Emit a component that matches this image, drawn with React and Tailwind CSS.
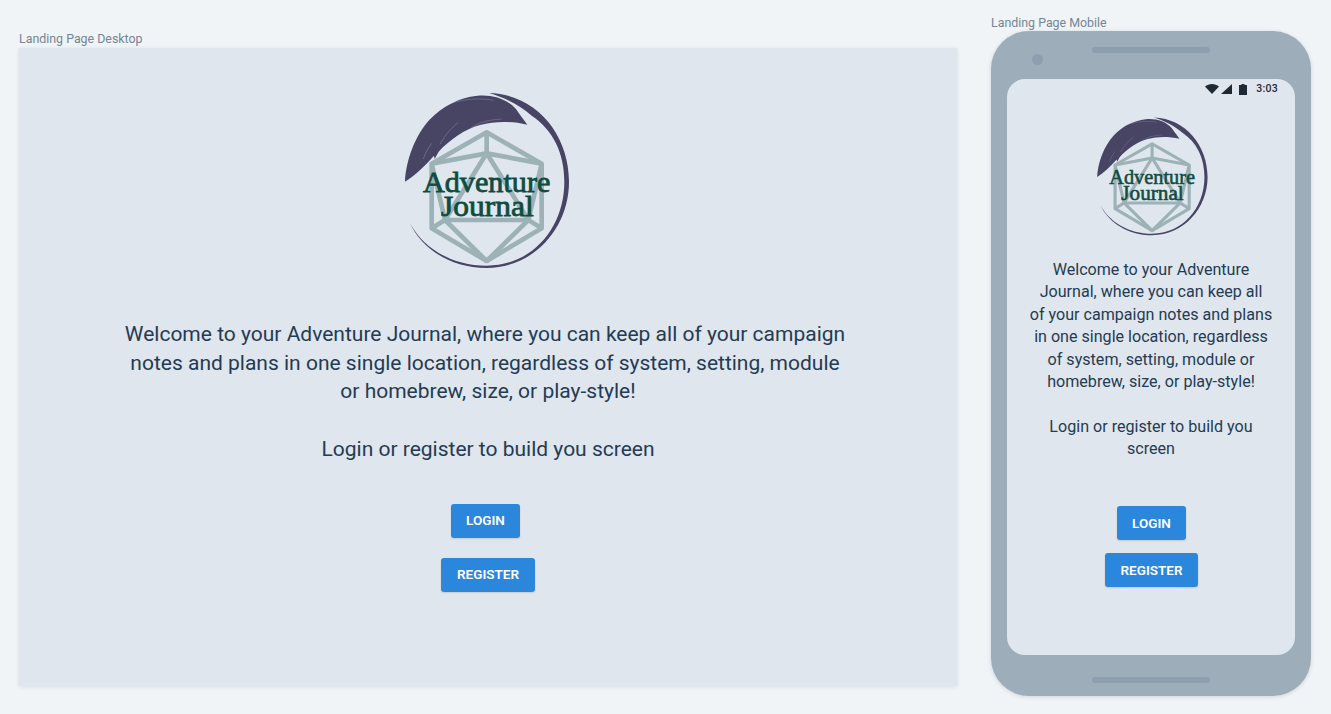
const Logo = ({ className }) => (
    <svg viewBox="0 0 570 570" className={className}>
        {/* d20 */}
        <g fill="none" stroke="#9db2b6" strokeWidth="14" strokeLinejoin="round">
            <path d="M290 142 L455 236 L455 430 L290 528 L125 430 L125 236 Z" />
            <path d="M290 205 L415 405 L165 405 Z" />
            <path d="M290 142 L290 205 M125 236 L290 205 L455 236 M125 236 L165 405 M455 236 L415 405 M125 430 L165 405 M455 430 L415 405 M290 528 L165 405 M290 528 L415 405" />
        </g>
        {/* ring */}
        <path
            fill="#474464"
            d="M298 24 C440 28 537 150 537 290 C537 430 430 549 290 549 C180 549 95 490 60 415 C100 490 185 542 290 542 C425 542 523 430 523 290 C523 205 490 135 425 92 C390 62 345 38 298 24 Z"
        />
        {/* feather */}
        <path
            fill="#474464"
            d="M45 290 C48 225 76 150 120 103 C155 66 205 38 262 32 C310 28 350 42 378 72 C392 92 402 106 412 119 C365 108 315 108 270 120 C225 132 178 165 146 200 L134 222 L132 212 C105 242 75 272 45 290 Z"
        />
        <g fill="none" stroke="#dfe6ee" strokeWidth="1" opacity="0.7">
            <path d="M178 56 C225 42 270 38 310 46" />
            <path d="M242 130 C265 112 295 105 335 102" />
            <path d="M150 178 C165 150 185 128 205 112" />
            <path d="M100 222 C106 205 114 190 124 175" />
        </g>
        <g fill="#0f4c3f" stroke="#0f4c3f" strokeWidth="2.4" textAnchor="middle" style={{ fontFamily: '"Liberation Serif", serif' }}>
            <text x="290" y="320" fontSize="90" textLength="382" lengthAdjust="spacingAndGlyphs">Adventure</text>
            <text x="292" y="394" fontSize="90" textLength="278" lengthAdjust="spacingAndGlyphs">Journal</text>
        </g>
    </svg>
);

const Button = ({ children, className }) => (
    <button className={`h-[34px] rounded-[3px] bg-[#2b87dc] text-[13.5px] font-semibold uppercase text-white shadow-[0_1px_2px_rgba(0,0,0,0.12)] ${className}`}>
        {children}
    </button>
);

const StatusBar = () => (
    <div className="flex h-[19px] items-center justify-end pr-[17px] pt-[1px] text-[#1f2933]">
        <svg viewBox="0 0 14 10" className="h-[10px] w-[14px]">
            <path d="M0 2.6 C4 -0.8 10 -0.8 14 2.6 L7 10 Z" fill="currentColor" />
        </svg>
        <svg viewBox="0 0 11 10" className="ml-[2px] h-[10px] w-[11px]">
            <path d="M11 0 L11 10 L0 10 Z" fill="currentColor" />
        </svg>
        <svg viewBox="0 0 8 11" className="ml-[7px] h-[11px] w-[8px]">
            <path d="M2.5 0 H5.5 V1 H8 V11 H0 V1 H2.5 Z" fill="currentColor" />
        </svg>
        <span className="ml-[9px] text-[10.5px] font-medium leading-none tracking-[0.3px]">3:03</span>
    </div>
);

export default function App() {
    return (
        <div className="flex h-[714px] w-[1331px] overflow-hidden bg-[#f0f4f7] font-['Roboto',sans-serif]">
            {/* desktop */}
            <div className="ml-[19px] mt-[31px] w-[938px]">
                <div className="h-[17px] text-[12.4px] leading-4 text-[#748596]">Landing Page Desktop</div>
                <div className="flex h-[638px] flex-col items-center bg-[#dfe6ee] pt-[37px] shadow-[0_1px_4px_rgba(16,42,67,0.1)]">
                    <Logo className="mr-[6px] h-[190px] w-[190px] shrink-0" />
                    <div className="mt-[45px] text-center text-[21px] leading-[28.7px] text-[#243b53]">
                        <p className="pr-[6px]">
                            Welcome to your Adventure Journal, where you can keep all of your campaign
                            <br />
                            notes and plans in one single location, regardless of system, setting, module
                        </p>
                        <p>
                            or homebrew, size, or play-style!
                            <br />
                            <br />
                            Login or register to build you screen
                        </p>
                    </div>
                    <div className="mt-[40px] flex flex-col items-center gap-[20px]">
                        <Button className="mr-[5px] px-[15px]">Login</Button>
                        <Button className="px-[15.5px]">Register</Button>
                    </div>
                </div>
            </div>

            {/* mobile */}
            <div className="ml-[34px] mt-[15px] w-[320px]">
                <div className="h-[16px] text-[12.4px] leading-4 text-[#748596]">Landing Page Mobile</div>
                <div className="relative h-[665px] rounded-[38px] bg-[#9dadba] shadow-[0_1px_4px_rgba(16,42,67,0.15)]">
                    <div className="absolute left-[41px] top-[23px] h-[11px] w-[11px] rounded-full bg-[#8d9fae]" />
                    <div className="flex h-[48px] justify-center pt-[16px]">
                        <div className="h-[6px] w-[118px] rounded-full bg-[#8d9fae]" />
                    </div>
                    <div className="mx-[16px] flex h-[576px] flex-col items-center rounded-[18px] bg-[#dfe6ee]">
                        <div className="w-full self-stretch">
                            <StatusBar />
                        </div>
                        <Logo className="mt-[14px] h-[128px] w-[128px] shrink-0" />
                        <p className="mt-[19px] text-center text-[16.1px] leading-[22.4px] text-[#243b53]">
                            Welcome to your Adventure
                            <br />
                            Journal, where you can keep all
                            <br />
                            of your campaign notes and plans
                            <br />
                            in one single location, regardless
                            <br />
                            of system, setting, module or
                            <br />
                            homebrew, size, or play-style!
                            <br />
                            <br />
                            Login or register to build you
                            <br />
                            screen
                        </p>
                        <div className="ml-[1px] mt-[45px] flex flex-col items-center gap-[13px]">
                            <Button className="px-[15px]">Login</Button>
                            <Button className="px-[15.5px]">Register</Button>
                        </div>
                    </div>
                    <div className="flex justify-center pt-[22px]">
                        <div className="h-[6px] w-[118px] rounded-full bg-[#8d9fae]" />
                    </div>
                </div>
            </div>
        </div>
    );
}
